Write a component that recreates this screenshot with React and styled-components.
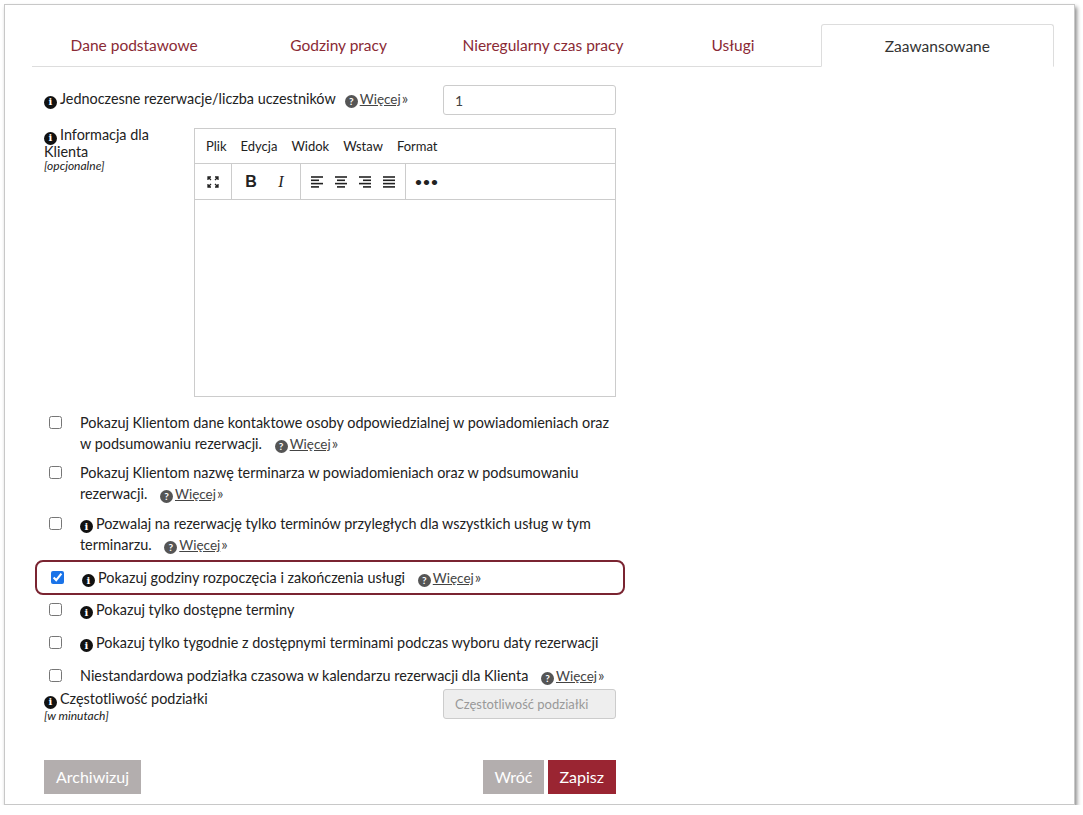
import React from "react";
import styled, { createGlobalStyle } from "styled-components";

const G = createGlobalStyle`
  body{margin:0;background:#fff;font-family:Lato,"Liberation Sans",sans-serif;color:#222;font-size:14.4px;}
`;
const Frame = styled.div`
  margin:4px 0 0 4px;width:1071px;height:801px;box-sizing:border-box;
  border:1px solid #c8c8c8;box-shadow:2px 3px 4px rgba(0,0,0,.45);background:#fff;
  padding:19px 20px 0 27px;
`;
const Tabs = styled.div`display:flex;border-bottom:1px solid #ddd;height:42px;`;
const Tab = styled.div`
  width:${p=>p.w}px;display:flex;align-items:center;justify-content:center;font-size:15.5px;
  color:${p=>p.active?"#333":"#8a2a35"};box-sizing:border-box;
  ${p=>p.active?"border:1px solid #ddd;border-bottom:1px solid #fff;margin-bottom:-1px;height:43px;background:#fff;border-radius:3px 3px 0 0;":""}
`;
const Form = styled.div`width:572px;padding:18px 0 0 12px;`;
const Row = styled.div`display:flex;align-items:${p=>p.top?"flex-start":"center"};justify-content:space-between;margin-bottom:${p=>p.mb||0}px;`;
const Input = styled.div`
  width:173px;height:30px;box-sizing:border-box;border:1px solid #ccc;border-radius:3px;
  padding:0 11px;display:flex;align-items:center;font-size:${p=>p.dis?"13px":"14px"};color:${p=>p.dis?"#999":"#444"};
  background:${p=>p.dis?"#eee":"#fff"};
`;
const Info = styled.span`
  display:inline-flex;width:13px;height:13px;border-radius:50%;background:#111;color:#fff;
  font-size:10px;font-weight:bold;align-items:center;justify-content:center;margin-right:3px;vertical-align:-1px;font-family:"DejaVu Serif",serif;
`;
const Q = styled(Info)`background:#555;font-family:Lato,sans-serif;font-size:10px;margin-right:2px;`;
const More = styled.span`margin-left:9px;white-space:nowrap;color:#444;font-size:13.5px;
  u{text-decoration:underline;} b{font-weight:400;font-size:15px;margin-left:1px;} `;
const Sub = styled.div`font-style:italic;font-size:12px;line-height:13px;`;
const Label = styled.div`width:${p=>p.w||"auto"};line-height:14px;`;
const Editor = styled.div`width:422px;height:269px;border:1px solid #ccc;box-sizing:border-box;display:flex;flex-direction:column;`;
const Menu = styled.div`height:34px;display:flex;align-items:center;gap:14px;padding-left:11px;font-size:13px;border-bottom:1px solid #ccc;color:#222;`;
const Tools = styled.div`height:35px;display:flex;border-bottom:1px solid #ccc;`;
const Group = styled.div`display:flex;align-items:center;gap:${p=>p.gap||0}px;padding:0 ${p=>p.px||10}px;border-right:${p=>p.last?"none":"1px solid #ccc"};`;
const Btn = styled.span`width:22px;display:flex;justify-content:center;font-size:16px;`;
const Checks = styled.div`margin-top:15px;display:flex;flex-direction:column;`;
const CRow = styled.div`
  display:flex;align-items:flex-start;line-height:21px;margin:${p=>p.m||"0"};
  ${p=>p.hl?"border:2px solid #7a2431;border-radius:8px;padding:5px 0 4px 9px;margin:4px -9px 0 -9px;":""}
`;
const Box = styled.input`width:13px;height:13px;margin:4px 18px 0 5px;flex-shrink:0;accent-color:#1a73e8;`;
const Buttons = styled.div`display:flex;justify-content:space-between;margin-top:38px;`;
const Button = styled.div`background:${p=>p.bg};color:#fff;font-size:16px;height:34px;padding:0 ${p=>p.px}px;display:flex;align-items:center;`;

const Ico = ({children}) => <svg width="16" height="16" viewBox="0 0 16 16" fill="none" stroke="#222" strokeWidth="1.6">{children}</svg>;
const Align = ({lines}) => <Ico>{lines.map((l,i)=><line key={i} x1={l[0]} x2={l[1]} y1={3+i*3.3} y2={3+i*3.3}/>)}</Ico>;
const Wiecej = () => <More><Q>?</Q><u>Więcej</u><b>»</b></More>;

export default function App(){
  return <><G/><Frame>
    <Tabs>
      <Tab w={206}>Dane podstawowe</Tab><Tab w={206}>Godziny pracy</Tab><Tab w={206}>Nieregularny czas pracy</Tab><Tab w={177}>Usługi</Tab><Tab w={235} active>Zaawansowane</Tab>
    </Tabs>
    <Form>
      <Row mb={13}><Label><Info>i</Info>Jednoczesne rezerwacje/liczba uczestników<Wiecej/></Label><Input>1</Input></Row>
      <Row top>
        <Label w="130px"><Info>i</Info>Informacja dla Klienta<Sub>[opcjonalne]</Sub></Label>
        <Editor>
          <Menu><span>Plik</span><span>Edycja</span><span>Widok</span><span>Wstaw</span><span>Format</span></Menu>
          <Tools>
            <Group px={10}><Ico><path d="M3 6V3h3M13 6V3h-3M3 10v3h3M13 10v3h-3M3 3l3 3M13 3l-3 3M3 13l3-3M13 13l-3-3" strokeWidth="1.3"/></Ico></Group>
            <Group px={8} gap={8}><Btn style={{fontWeight:700,fontFamily:"Liberation Sans"}}>B</Btn><Btn style={{fontStyle:"italic",fontFamily:"Liberation Serif"}}>I</Btn></Group>
            <Group px={8} gap={8}>
              <Align lines={[[2,14],[2,10],[2,14],[2,10]]}/><Align lines={[[2,14],[4,12],[2,14],[4,12]]}/>
              <Align lines={[[2,14],[6,14],[2,14],[6,14]]}/><Align lines={[[2,14],[2,14],[2,14],[2,14]]}/>
            </Group>
            <Group px={10} last><Btn style={{fontWeight:700,fontSize:12,letterSpacing:1}}>•••</Btn></Group>
          </Tools>
        </Editor>
      </Row>
      <Checks>
        <CRow><Box type="checkbox"/><div>Pokazuj Klientom dane kontaktowe osoby odpowiedzialnej w powiadomieniach oraz w podsumowaniu rezerwacji. <Wiecej/></div></CRow>
        <CRow m="7px 0 0"><Box type="checkbox"/><div>Pokazuj Klientom nazwę terminarza w powiadomieniach oraz w podsumowaniu rezerwacji. <Wiecej/></div></CRow>
        <CRow m="8px 0 0"><Box type="checkbox"/><div><Info>i</Info>Pozwalaj na rezerwację tylko terminów przyległych dla wszystkich usług w tym terminarzu. <Wiecej/></div></CRow>
        <CRow hl><Box type="checkbox" defaultChecked/><div><Info>i</Info>Pokazuj godziny rozpoczęcia i zakończenia usługi <Wiecej/></div></CRow>
        <CRow m="4px 0 0"><Box type="checkbox"/><div><Info>i</Info>Pokazuj tylko dostępne terminy</div></CRow>
        <CRow m="12px 0 0"><Box type="checkbox"/><div><Info>i</Info>Pokazuj tylko tygodnie z dostępnymi terminami podczas wyboru daty rezerwacji</div></CRow>
        <CRow m="12px 0 0"><Box type="checkbox"/><div>Niestandardowa podziałka czasowa w kalendarzu rezerwacji dla Klienta <Wiecej/></div></CRow>
      </Checks>
      <Row top style={{marginTop:2}}>
        <Label style={{marginTop:3}}><Info>i</Info>Częstotliwość podziałki<Sub>[w minutach]</Sub></Label>
        <Input dis>Częstotliwość podziałki</Input>
      </Row>
      <Buttons>
        <Button bg="#b3aeae" px={12}>Archiwizuj</Button>
        <div style={{display:"flex",gap:4}}><Button bg="#b3aeae" px={11}>Wróć</Button><Button bg="#9a2532" px={12}>Zapisz</Button></div>
      </Buttons>
    </Form>
  </Frame></>;
}
